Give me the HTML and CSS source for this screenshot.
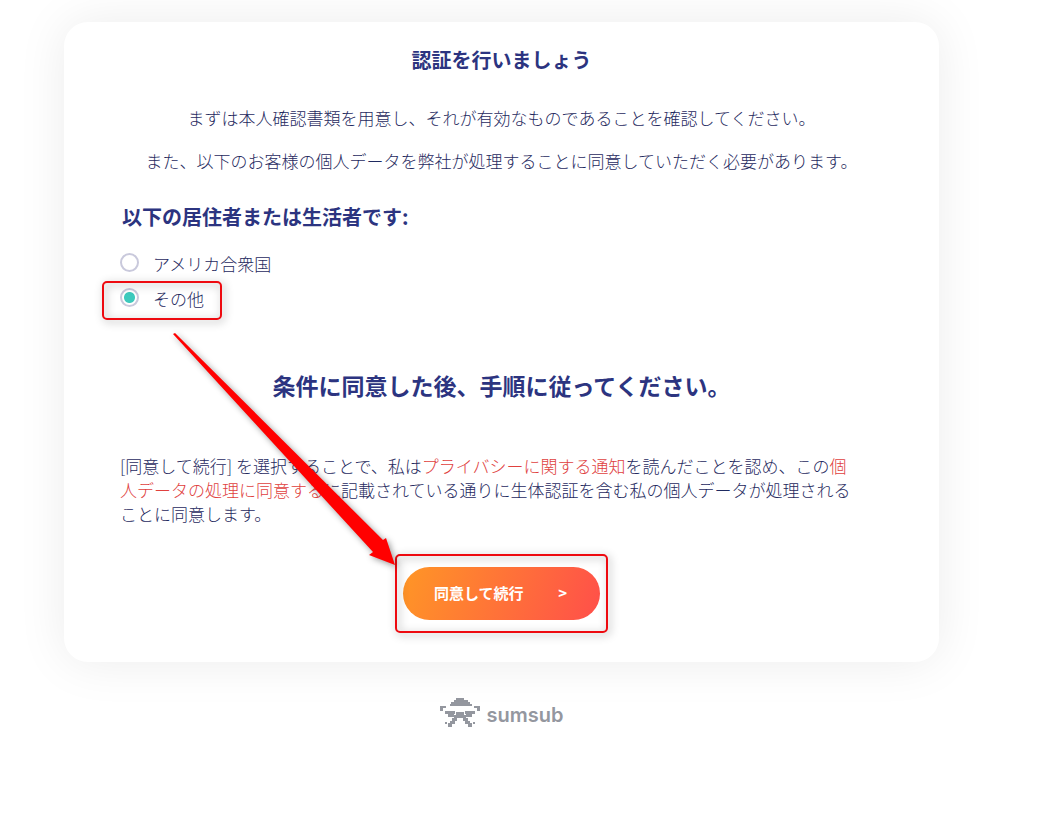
FILE: index.html
```
<!DOCTYPE html>
<html lang="ja">
<head>
  <meta charset="UTF-8">
  <title>認証を行いましょう</title>
  <meta name="viewport" content="width=device-width, initial-scale=1.0">
  <link rel="stylesheet" href="styles.css">
</head>
<body>
  <main class="card">
    <h1 class="title">認証を行いましょう</h1>
    <p class="intro">まずは本人確認書類を用意し、それが有効なものであることを確認してください。</p>
    <p class="intro">また、以下のお客様の個人データを弊社が処理することに同意していただく必要があります。</p>

    <form>
      <fieldset class="residence">
        <legend>以下の居住者または生活者です:</legend>
        <label class="option">
          <input type="radio" name="country" value="us">
          <span>アメリカ合衆国</span>
        </label>
        <label class="option marked">
          <input type="radio" name="country" value="other" checked>
          <span>その他</span>
        </label>
      </fieldset>

      <h2 class="steps">条件に同意した後、手順に従ってください。</h2>

      <p class="agreement">[同意して続行] を選択することで、私は<a href="#">プライバシーに関する通知</a>を読んだことを認め、この<a href="#">個人データの処理に同意する</a>に記載されている通りに生体認証を含む私の個人データが処理されることに同意します。</p>

      <div class="actions">
        <div class="marked">
          <button type="button" class="continue"><span>同意して続行</span><span>&gt;</span></button>
        </div>
      </div>
    </form>

    <!-- Arrow from the option to the button -->
    <svg class="arrow" width="240" height="250" viewBox="0 0 240 250" aria-hidden="true">
      <path d="M9 12 L11 11 L219 218 L222 216 L231 243 L205 233 L209 230 Z" fill="#ff0000"/>
    </svg>
  </main>

  <footer class="brand">
    <svg width="40" height="30" viewBox="0 0 40 30" fill="#94979f" aria-hidden="true">
      <path d="M16 0h8v2h4v2h2v2h2v2H10V6h1V4h3V2h2z"/>
      <path d="M0 8h6v2H3v3H0zM34 8h6v5h-3v-3h-3z"/>
      <path d="M5 13h10v3h-1v3H8v-3H5zM25 13h10v3h-3v3h-6v-3h-1z"/>
      <path d="M16 14h8v3h2v3h2v3h2v2h2v4h-4v-3h-3v-3h-2v-3h-6v3h-2v3h-3v3H8v-4h2v-2h2v-3h2v-3h2z"/>
      <path d="M5 24h2v2H5zM33 24h2v2h-2z"/>
    </svg>
    <span>sumsub</span>
  </footer>
</body>
</html>
```
FILE: styles.css
```
* {
  margin: 0;
  padding: 0;
  box-sizing: border-box;
}

body {
  background: #fff;
  color: #1f2a60;
  font-family: "Noto Sans CJK JP", sans-serif;
  font-size: 17px;
  font-weight: 300;
  line-height: 24px;
  padding: 22px 102px 40px 64px;
}

.card {
  position: relative;
  padding: 24px 56px 42px;
  border-radius: 24px;
  background: #fff;
  box-shadow: 0 0 50px rgba(0, 0, 0, 0.08);
}

h1, h2, legend {
  color: #2c3480;
  font-size: 20px;
  font-weight: 700;
  line-height: 28px;
}

.title {
  margin-bottom: 32px;
  text-align: center;
}

.intro {
  margin-bottom: 19px;
  text-align: center;
}

.residence {
  margin-top: 30px;
  border: none;
}

.residence legend {
  margin-bottom: 17px;
  padding-left: 2px;
}

.option {
  display: flex;
  align-items: flex-start;
  gap: 14px;
  width: fit-content;
  height: 35px;
  line-height: 32px;
  cursor: pointer;
}

.option input {
  appearance: none;
  width: 19px;
  height: 19px;
  margin-top: 5px;
  border: 2px solid #c9c9dc;
  border-radius: 50%;
  background: #fff;
}

.option input:checked {
  background: radial-gradient(circle, #3dc9bd 5px, #fff 6px);
}

/* Red highlight boxes */
.marked {
  position: relative;
}

.marked::after {
  content: "";
  position: absolute;
  inset: -13px -8px;
  border: 2px solid #ee0a10;
  border-radius: 5px;
  filter: drop-shadow(2px 2px 4px rgba(0, 0, 0, 0.4));
  pointer-events: none;
}

.option.marked::after {
  inset: -2px -18px;
}

.steps {
  margin: 51px 0 53px;
  font-size: 23px;
  line-height: 32px;
  text-align: center;
}

.agreement {
  max-width: 736px;
}

.agreement a {
  color: #e0413e;
  text-decoration: none;
}

.actions {
  display: flex;
  justify-content: center;
  margin-top: 41px;
}

.continue {
  display: flex;
  align-items: center;
  justify-content: space-between;
  width: 197px;
  height: 53px;
  padding: 0 33px 3px 31px;
  border: none;
  border-radius: 27px;
  background: linear-gradient(110deg, #ff9626, #ff4f4a);
  color: #fff;
  font-family: inherit;
  font-size: 15px;
  font-weight: 700;
  cursor: pointer;
}

.arrow {
  position: absolute;
  top: 300px;
  left: 100px;
  filter: drop-shadow(2px 2px 3px rgba(0, 0, 0, 0.4));
  pointer-events: none;
}

.brand {
  display: flex;
  align-items: center;
  justify-content: center;
  gap: 7px;
  margin-top: 36px;
  color: #94979f;
  font-family: Inter, sans-serif;
  font-size: 20px;
  font-weight: 600;
}

.brand span {
  padding-top: 4px;
}
```
